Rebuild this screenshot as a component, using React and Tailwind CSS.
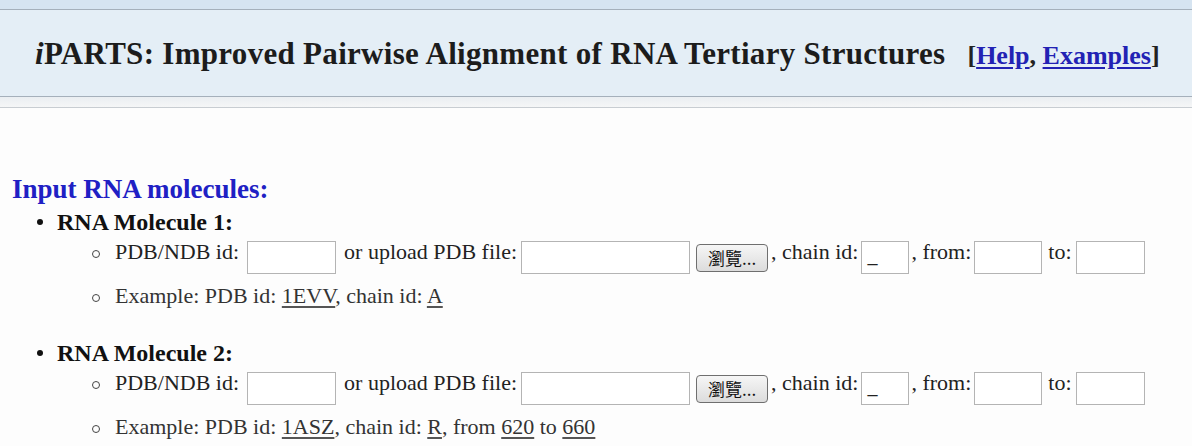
import React from "react";

const serif = { fontFamily: '"Liberation Serif", "Times New Roman", serif' };

function Box({ w, value = "", className = "" }) {
  return (
    <div
      className={`h-[33px] border border-[#b4b4b4] bg-white shrink-0 text-[20px] leading-[26px] pl-[5px] text-[#222] ${className}`}
      style={{ width: w }}
    >
      {value}
    </div>
  );
}

function Browse({ className = "" }) {
  return (
    <div
      className={`mt-[3px] h-[28px] w-[72px] shrink-0 rounded-[4px] border border-[#6f6f6f] bg-gradient-to-b from-[#f6f6f6] to-[#dcdcdc] flex items-center justify-center text-[17px] text-[#111] ${className}`}
      style={{ fontFamily: '"Noto Sans CJK TC", "Liberation Sans", sans-serif' }}
    >
      瀏覽...
    </div>
  );
}

function U({ children }) {
  return <span className="underline underline-offset-[3px] decoration-[#555]">{children}</span>;
}

function SubItem({ children, className = "" }) {
  return (
    <div className={`flex items-start ${className}`}>
      <span className="w-[8px] h-[8px] mt-[9px] ml-[92px] mr-[15px] rounded-full border border-[#444] shrink-0" />
      {children}
    </div>
  );
}

function Molecule({ n, example, className = "" }) {
  return (
    <div className={className}>
      <div className="flex items-center h-[28px] text-[24px] font-bold text-[#111]">
        <span className="w-[6px] h-[6px] ml-[37px] mr-[14px] rounded-full bg-[#111] shrink-0" />
        RNA Molecule {n}:
      </div>
      <SubItem className="mt-[5px] text-[22px] leading-[22px] text-[#222]">
        <span className="whitespace-nowrap">PDB/NDB id:</span>
        <Box w={89} className="ml-[8px]" />
        <span className="ml-[8px] whitespace-nowrap">or upload PDB file:</span>
        <Box w={169} className="ml-[4px]" />
        <Browse className="ml-[6px]" />
        <span className="ml-[3px] whitespace-nowrap">, chain id:</span>
        <Box w={48} value="_" className="ml-[3px]" />
        <span className="ml-[2px] whitespace-nowrap">, from:</span>
        <Box w={68} className="ml-[3px]" />
        <span className="ml-[6px] whitespace-nowrap">to:</span>
        <Box w={69} className="ml-[4px]" />
      </SubItem>
      <SubItem className="mt-[11px] text-[22px] leading-[22px] text-[#333]">
        <span className="whitespace-nowrap">{example}</span>
      </SubItem>
    </div>
  );
}

export default function App() {
  return (
    <div className="w-[1192px] h-[446px] overflow-hidden bg-[#fdfdfd]" style={serif}>
      {/* header strip */}
      <div className="h-[9px] bg-[#d6e4f1]" />
      <div className="h-[88px] border-y border-[#a5b0bb] bg-[#e4eef6] pt-[26px] pl-[35px] flex items-baseline">
        <span className="text-[31px] leading-[31px] font-bold tracking-[0.3px] text-[#1c1c1c] whitespace-nowrap">
          <i>i</i>PARTS: Improved Pairwise Alignment of RNA Tertiary Structures
        </span>
        <span className="ml-[22px] text-[26px] font-bold text-[#222] whitespace-nowrap">
          [<a className="text-[#2222b4] underline underline-offset-[3px]">Help</a>,{" "}
          <a className="text-[#2222b4] underline underline-offset-[3px]">Examples</a>]
        </span>
      </div>
      <div className="h-[10px] bg-gradient-to-b from-[#eaeef2] to-[#f5f6f7]" />
      <div className="h-[1px] bg-[#c8cdd2]" />

      <div className="pt-[66px]">
        <div className="pl-[12px] text-[27px] leading-[30px] font-bold text-[#2020c4]">
          Input RNA molecules:
        </div>
        <Molecule
          n={1}
          className="mt-[4px]"
          example={
            <>
              Example: PDB id: <U>1EVV</U>, chain id: <U>A</U>
            </>
          }
        />
        <Molecule
          n={2}
          className="mt-[32px]"
          example={
            <>
              Example: PDB id: <U>1ASZ</U>, chain id: <U>R</U>, from <U>620</U> to <U>660</U>
            </>
          }
        />
      </div>
    </div>
  );
}
